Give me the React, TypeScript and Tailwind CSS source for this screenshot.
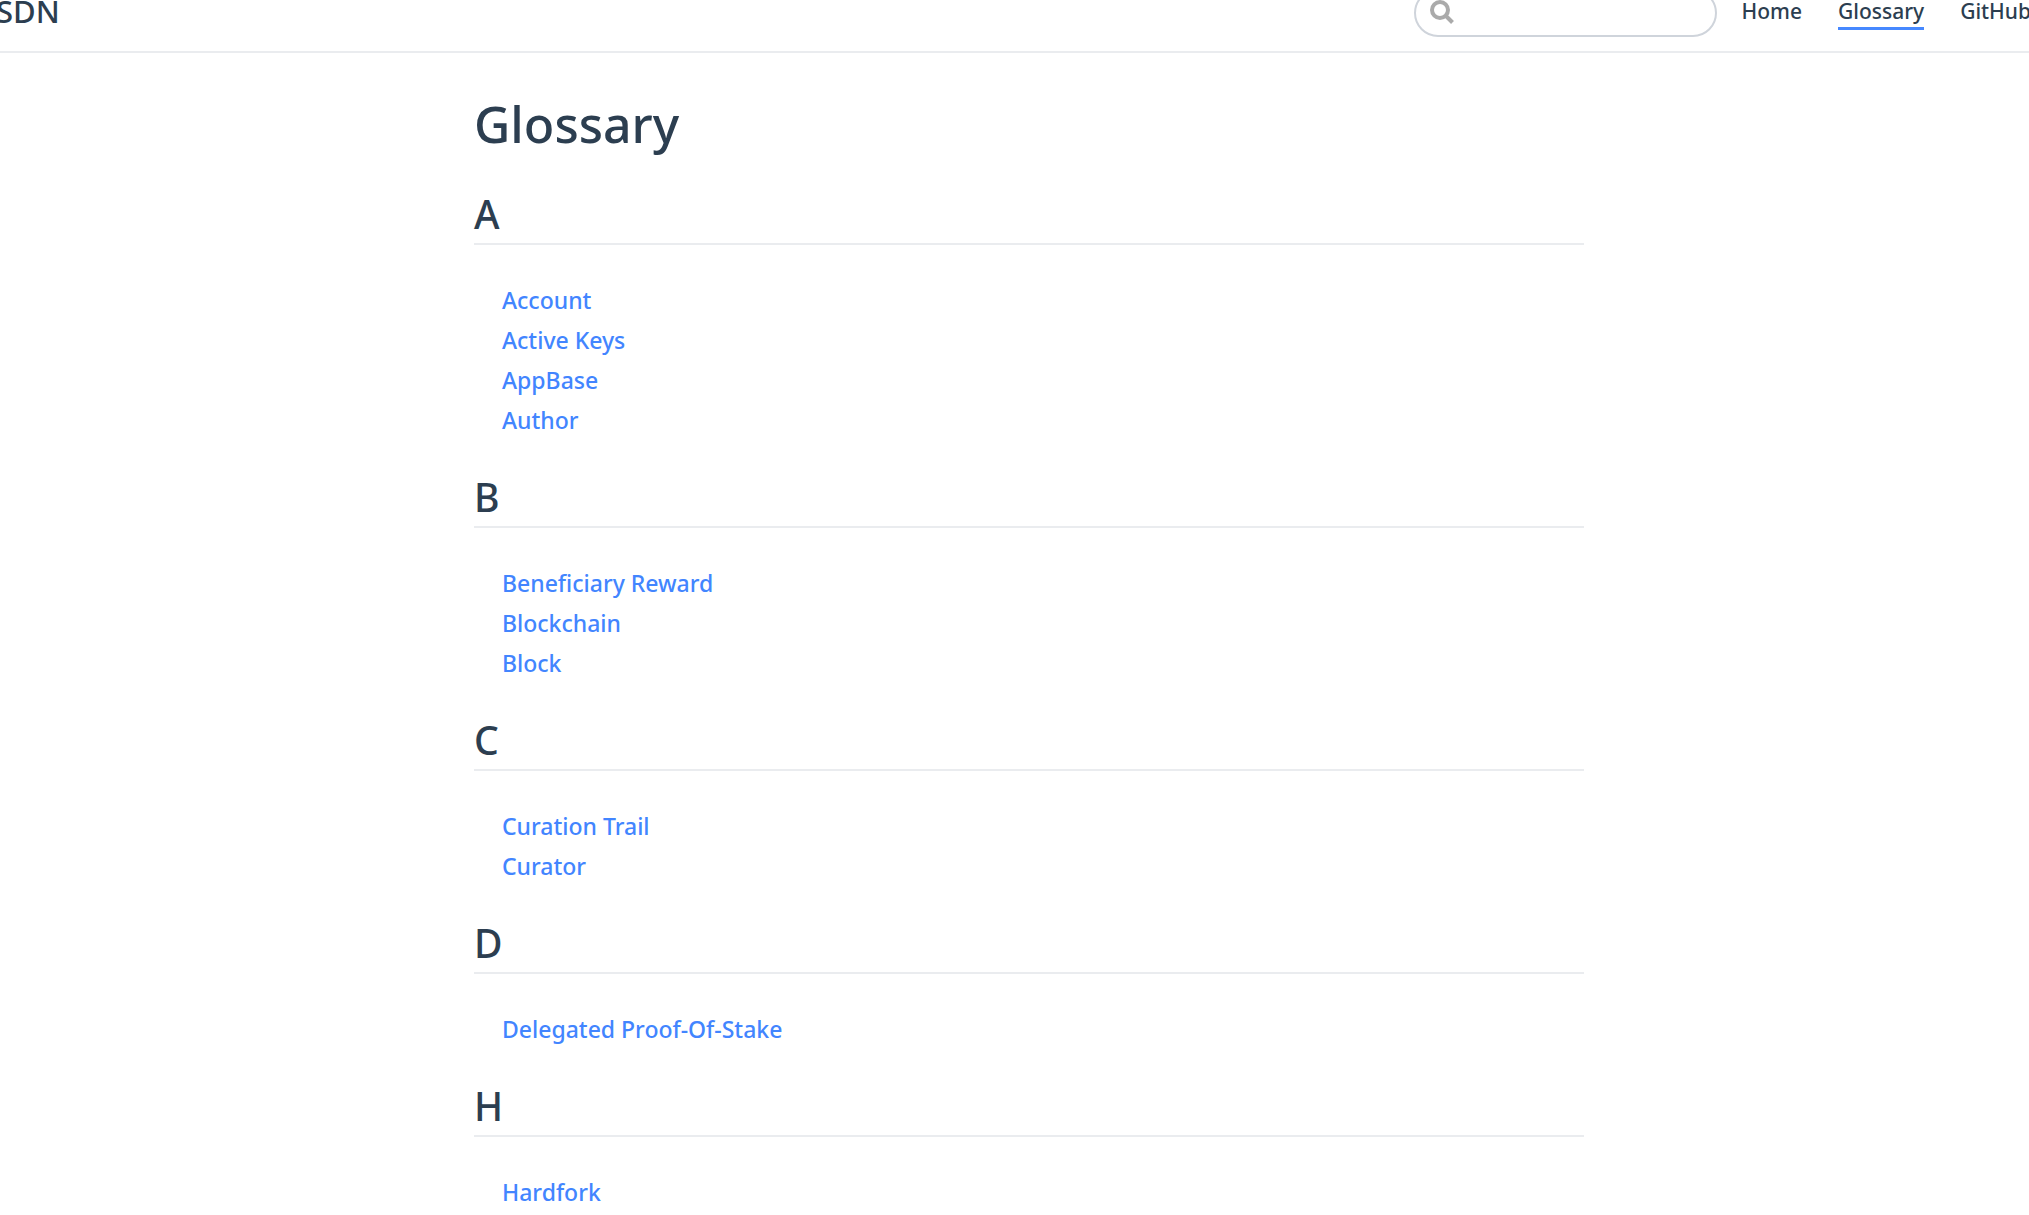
interface GlossarySection {
  letter: string;
  terms: string[];
}

const sections: GlossarySection[] = [
  { letter: 'A', terms: ['Account', 'Active Keys', 'AppBase', 'Author'] },
  { letter: 'B', terms: ['Beneficiary Reward', 'Blockchain', 'Block'] },
  { letter: 'C', terms: ['Curation Trail', 'Curator'] },
  { letter: 'D', terms: ['Delegated Proof-Of-Stake'] },
  { letter: 'H', terms: ['Hardfork'] },
];

const navLinks = [
  { label: 'Home', active: false },
  { label: 'Glossary', active: true },
  { label: 'GitHub', active: false },
];

const SearchIcon = () => (
  <svg className="absolute left-[14px] top-[9px] h-7 w-7" viewBox="0 0 28 28" fill="none" stroke="#aaaaaa" strokeWidth="4" aria-hidden="true">
    <circle cx="12" cy="12" r="8" />
    <path d="M18 18l6.5 6.5" />
  </svg>
);

const Navbar = () => (
  <header className="-mt-[33px] flex h-[86px] items-center justify-between border-b-2 border-[#eaecef] pt-2">
    <a href="#" className="-ml-1 pb-1 text-[31px] leading-8">SDN</a>
    <div className="-mr-0.5 flex items-center">
      <div className="relative mr-6">
        <SearchIcon />
        <input
          type="text"
          aria-label="Search"
          className="block h-12 w-[303px] rounded-full border-2 border-[#cfd4db] bg-white pl-12 pr-4 text-[21px] outline-none focus:border-[#4688ff]"
        />
      </div>
      <nav className="flex gap-9 pb-0.5 text-[21px] leading-8">
        {navLinks.map((link) => (
          <a
            key={link.label}
            href="#"
            className={link.active ? 'border-b-3 border-[#4688ff]' : 'border-b-3 border-transparent'}
          >
            {link.label}
          </a>
        ))}
      </nav>
    </div>
  </header>
);

const App = () => {
  return (
    <div className="h-screen overflow-hidden bg-white font-['Noto_Sans','Open_Sans',sans-serif] font-medium text-[#2c3e50]">
      <Navbar />
      <main className="pl-[29px]">
        <div className="mx-auto max-w-[1110px]">
          <h1 className="pt-[38px] text-[50px] leading-[66px]">Glossary</h1>
          {sections.map((section) => (
            <section key={section.letter} className="pt-8">
              <h2 className="border-b-2 border-[#eaecef] pb-1 text-[39px] leading-[50px]">{section.letter}</h2>
              <ul className="pl-7 pt-[35px] text-[23px] leading-10">
                {section.terms.map((term) => (
                  <li key={term}>
                    <a href="#" className="text-[#4285ff] hover:underline">{term}</a>
                  </li>
                ))}
              </ul>
            </section>
          ))}
        </div>
      </main>
    </div>
  );
};

export default App;
